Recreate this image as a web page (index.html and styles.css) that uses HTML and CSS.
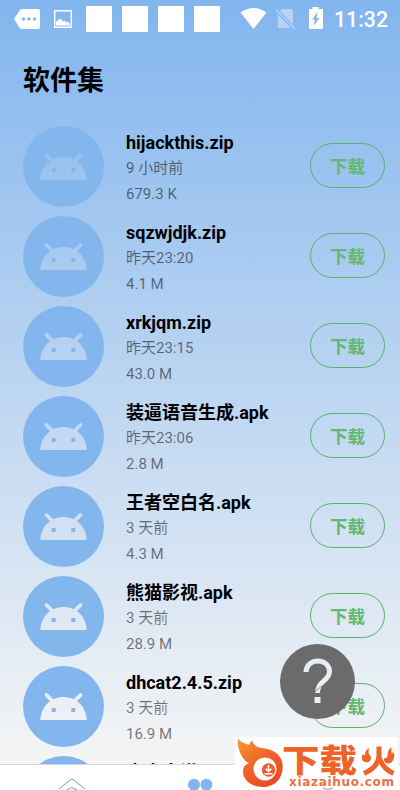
FILE: index.html
```html
<!DOCTYPE html>
<html lang="zh-CN">
<head>
<meta charset="utf-8">
<title>软件集</title>
<link rel="stylesheet" href="styles.css">
</head>
<body>
<svg class="defs" width="0" height="0" aria-hidden="true">
  <mask id="robot" maskUnits="userSpaceOnUse" x="0" y="0" width="81" height="81">
    <path fill="#fff" d="M0 0h81v81H0z"/>
    <path d="M17.300 54C18 40.500 27.500 31 40.500 31S63 40.500 63.700 54z"/>
    <path fill="none" stroke="#000" stroke-width="3.800" stroke-linecap="round" d="M23.500 29l6.500 6.500M57.500 29L51 35.500"/>
    <path fill="#fff" d="M28.700 42h4v4h-4zM48.300 42h4v4h-4z"/>
  </mask>
  <symbol id="android" viewBox="0 0 81 81">
    <circle cx="40.500" cy="40.500" r="40.500" fill="#84b6ee" mask="url(#robot)"/>
  </symbol>
</svg>
<div class="screen">
  <header class="status">
    <svg width="240" height="40" viewBox="0 0 240 40">
      <path fill="#fff" fill-rule="evenodd" d="M22 9h16q2 0 2 2v16q0 2-2 2H22q-1.500 0-2.500-1.500L14 19l5.500-8.500Q20.500 9 22 9zM23.500 17.300a1.700 1.700 0 1 0 .01 0zM29 17.300a1.700 1.700 0 1 0 .01 0zM34.500 17.300a1.700 1.700 0 1 0 .01 0z"/>
      <path fill="none" stroke="#fff" stroke-width="1.400" d="M54.700 10.700h16.600v16.600H54.700z"/>
      <path fill="#fff" d="M56 25.500V22l4-3.500 3 3 1.500-1 2 2 1-1 2.500 2.500v1.500z"/>
      <path fill="#fff" d="M86 6h26v26H86zM122 6h26v26h-26zM158 6h26v26h-26zM194 6h26v26h-26z"/>
    </svg>
    <svg width="90" height="40" viewBox="240 0 90 40">
      <path fill="#fff" d="M240.500 12.500q13-9 26 0L253.500 29z"/>
      <path fill="#b5d3f5" d="M282 9h9.500q1.500 0 1.500 1.500v14L279.800 11zM277.800 14.500L291 28h-11.500q-1.700 0-1.700-1.500z"/>
      <path stroke="#b5d3f5" stroke-width="1.300" d="M276 10l19 19"/>
      <path fill="#fff" fill-rule="evenodd" d="M312.500 7h6v2h4.500v20h-14V9h3.500zM317.500 12l-5.500 7.500h3l-1.500 6.500 6-8h-3z"/>
    </svg>
    <span class="clock">11:32</span>
  </header>
  <h1 class="title">软件集</h1>
  <main class="list">
    <article class="row"><svg class="avatar"><use href="#android"/></svg><div class="info"><h2>hijackthis.zip</h2><p>9 小时前</p><p>679.3 K</p></div><button>下载</button></article>
    <article class="row"><svg class="avatar"><use href="#android"/></svg><div class="info"><h2>sqzwjdjk.zip</h2><p>昨天23:20</p><p>4.1 M</p></div><button>下载</button></article>
    <article class="row"><svg class="avatar"><use href="#android"/></svg><div class="info"><h2>xrkjqm.zip</h2><p>昨天23:15</p><p>43.0 M</p></div><button>下载</button></article>
    <article class="row"><svg class="avatar"><use href="#android"/></svg><div class="info"><h2>装逼语音生成.apk</h2><p>昨天23:06</p><p>2.8 M</p></div><button>下载</button></article>
    <article class="row"><svg class="avatar"><use href="#android"/></svg><div class="info"><h2>王者空白名.apk</h2><p>3 天前</p><p>4.3 M</p></div><button>下载</button></article>
    <article class="row"><svg class="avatar"><use href="#android"/></svg><div class="info"><h2>熊猫影视.apk</h2><p>3 天前</p><p>28.9 M</p></div><button>下载</button></article>
    <article class="row"><svg class="avatar"><use href="#android"/></svg><div class="info"><h2>dhcat2.4.5.zip</h2><p>3 天前</p><p>16.9 M</p></div><button>下载</button></article>
    <article class="row"><svg class="avatar"><use href="#android"/></svg><div class="info"><h2>文去水洪</h2></div></article>
  </main>
  <nav class="tabs">
    <svg width="400" height="25" viewBox="0 765 400 25">
      <path fill="none" stroke="#6fa3ad" stroke-width="1" d="M59 789l11.200-9.200q1.600-1.200 3.200 0L85 789M66.500 790l5.200-2.500 5.300 2.500"/>
      <circle cx="194" cy="784.700" r="6" fill="#84b6ee"/><circle cx="206.400" cy="784.700" r="6" fill="#84b6ee"/>
    </svg>
  </nav>
  <svg class="help" viewBox="0 0 75 75" role="img" aria-label="帮助">
    <mask id="cut"><path fill="#fff" d="M0 0h75v75H0z"/><path fill="none" stroke="#000" stroke-width="5" d="M26 28C26 13.500 49.500 13.500 49.500 27.500C49.500 37 37.500 36.500 37.500 49"/><path d="M34.500 53h6v6h-6z"/></mask>
    <circle cx="37.500" cy="37.500" r="37.500" fill="#6b6b6b" mask="url(#cut)"/>
  </svg>
  <svg class="brand" viewBox="235 737 163 53">
    <defs><linearGradient id="fire" x1="0" y1="0" x2=".7" y2="1"><stop offset="0" stop-color="#f89a2c"/><stop offset=".55" stop-color="#f0622a"/><stop offset="1" stop-color="#e64b27"/></linearGradient></defs>
    <path fill="#fff" d="M235 737h163v53H235z"/>
    <path fill="url(#fire)" fill-rule="evenodd" d="M237.500 738.500Q242 743 249 745Q250 741.500 252 740.500Q254 747 262 748Q280 750 282.500 764C284 778 275 787 263 787C248 787 241 777 243.500 768Q245 764 249 763.500Q238 757 237.500 738.500zM265 757.500a11.500 11.500 0 1 0 .01 0z"/>
    <circle cx="268.500" cy="770" r="6.700" fill="#ee5b2c"/>
    <path fill="none" stroke="#fff" stroke-width="1.500" d="M268.500 765v6M265.700 768.700l2.800 2.800 2.800-2.800M264.500 773.700h8"/>
    <text class="brand-name" transform="translate(282 772) scale(1.190 1)">下载</text>
    <path fill="none" stroke="#ee6428" stroke-width="5" d="M379 746.500v10Q378 767 364 773.500M379 757Q382 768 393.500 773.500"/>
    <path fill="#ee6428" d="M369 748q-1.500 5 1.500 8 1.500 4-2 6-4 1-6-1.500-1.500-4 .5-6.500 1 2 2 1 0-5 4-7zM391.500 747q-.5 5 .5 7 1-1 .5-3 3 4 1 8-2 5-6 4.500-4-1-3.500-5.500 3 1 3.500-2 0-6 4-9z"/>
    <text class="brand-url" x="289" y="786" textLength="105">xiazaihuo.com</text>
    <path fill="none" stroke="#9a9a9a" d="M323 788q5 3 10 0"/>
  </svg>
</div>
</body>
</html>
```
FILE: styles.css
```css
* { box-sizing: border-box; }
body, h1, h2, p { margin: 0; }
body { font-family: Roboto, "Noto Sans CJK SC", sans-serif; }
.defs { position: absolute; }
.screen {
  position: relative;
  display: flex;
  flex-direction: column;
  width: 400px;
  height: 790px;
  overflow: hidden;
  background: linear-gradient(#82b5ee, #f5f5f5 765px);
}
.status { display: flex; height: 40px; flex: none; }
.status svg { flex: none; }
.clock {
  padding-left: 4px;
  font-size: 21.300px;
  font-weight: 500;
  line-height: 40px;
  color: #fff;
  white-space: nowrap;
}
.title {
  height: 82px;
  flex: none;
  padding: 22px 0 0 23px;
  font-size: 27px;
  line-height: 38px;
  font-weight: 700;
  color: #000;
}
.list { flex: 1; min-height: 0; overflow: hidden; }
.row { display: flex; align-items: flex-start; height: 90px; padding: 4px 15px 0 23px; }
.avatar { width: 81px; height: 81px; flex: none; }
.info { flex: 1; padding: 4px 0 0 22px; white-space: nowrap; }
.info h2 { font-size: 18px; line-height: 26px; font-weight: 700; color: #000; }
.info p { height: 26px; font-size: 15px; line-height: 25px; color: rgba(0, 0, 0, .53); }
.row button {
  width: 75px;
  height: 45px;
  margin-top: 17px;
  padding: 0 0 1px;
  border: 1px solid #57b368;
  border-radius: 23px;
  background: none;
  font: 700 17.500px/43px "Noto Sans CJK SC", sans-serif;
  color: #62b772;
}
.tabs { height: 26px; flex: none; border-top: 1px solid #d5d7d9; background: #fff; }
.tabs svg { display: block; }
.help { position: absolute; left: 280px; top: 644px; width: 75px; height: 75px; }
.brand { position: absolute; left: 235px; top: 737px; width: 163px; height: 53px; }
.brand-name { font: 900 31.500px "Noto Sans CJK SC", sans-serif; fill: #ee6428; }
.brand-url { font: 700 12px "DejaVu Sans", sans-serif; fill: #ed7043; }
```
